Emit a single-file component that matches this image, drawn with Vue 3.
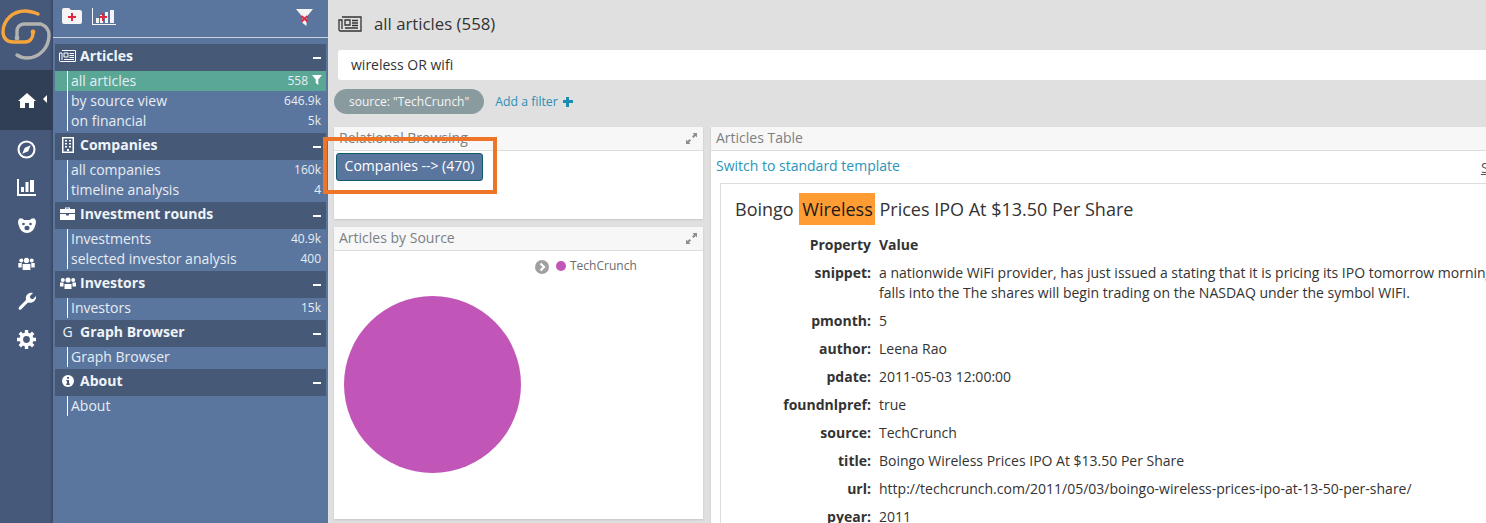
<template>
  <div class="app">
    <nav class="rail">
      <div class="logo">
        <svg width="53" height="70" viewBox="0 0 53 70" fill="none" stroke-width="3.400" stroke-linecap="round">
          <path d="M17 38 V31 C17 27 20 24 24 24 H41 C46 26 49 30 49 35 C49 48 39 58 27 58 C23 58 20 57 17 55" stroke="#b2b3b1"/>
          <circle cx="17" cy="38" r="2.400" fill="#b2b3b1"/>
          <path d="M38 14 C33 12 29 11 25 11 C13 11 3 20 3 32 C3 38 7 42 13 42 H25 C30 42 33 38 33 33" stroke="#f5a53c"/>
          <circle cx="33" cy="32" r="2.400" fill="#f5a53c"/>
        </svg>
      </div>
      <div class="rail-item active">
        <svg width="18" height="15" viewBox="0 0 18 15"><path d="M9 0 L18 8 L16 8 L16 15 L11 15 L11 10 L7 10 L7 15 L2 15 L2 8 L0 8 Z" fill="#fff"/></svg>
        <span class="caret"></span>
      </div>
      <div class="rail-icons">
        <div class="rail-icon"><svg width="19" height="19" viewBox="0 0 20 20"><circle cx="10" cy="10" r="8.400" fill="none" stroke="#fff" stroke-width="2.200"/><path d="M14.500 5.500 L11.800 11.800 L5.500 14.500 L8.200 8.200 Z" fill="#fff"/></svg></div>
        <div class="rail-icon"><svg width="19" height="17" viewBox="0 0 19 17"><path d="M0 0 H2 V15 H19 V17 H0 Z M4 8 H7 V13 H4 Z M8.500 3 H11.500 V13 H8.500 Z M13 1 H17 V13 H13 Z" fill="#fff"/></svg></div>
        <div class="rail-icon"><svg width="18" height="15" viewBox="0 0 18 15"><path d="M1 1 C3 -.5 5 1 6 2 H12 C13 1 15 -.5 17 1 C18.500 3 18 6 17 8 C16 12 13 15 9 15 C5 15 2 12 1 8 C0 6 -.5 3 1 1 Z" fill="#fff"/><circle cx="5.500" cy="6" r="1.300" fill="#46597a"/><circle cx="12.500" cy="6" r="1.300" fill="#46597a"/><ellipse cx="9" cy="10" rx="2.600" ry="2.200" fill="#46597a"/></svg></div>
        <div class="rail-icon"><svg width="17" height="13" viewBox="0 0 19 15"><circle cx="9.500" cy="4" r="3" fill="#fff"/><circle cx="3.500" cy="4" r="2.300" fill="#fff"/><circle cx="15.500" cy="4" r="2.300" fill="#fff"/><path d="M5 8 H14 V15 H5 Z M0 7 H4 V12 H0 Z M15 7 H19 V12 H15 Z" fill="#fff"/></svg></div>
        <div class="rail-icon"><svg width="19" height="19" viewBox="0 0 19 19"><path d="M2 15 L9 8 C8 4 11 0 16 1 L12.800 4.200 L13.500 6.500 L15.800 7.200 L19 4 C19.500 9 15 11.500 11 10.500 L4 17.500 C2.500 18.500 1 17 2 15 Z" fill="#fff"/></svg></div>
        <div class="rail-icon"><svg width="19" height="19" viewBox="0 0 19 19"><circle cx="9.500" cy="9.500" r="5.200" fill="none" stroke="#fff" stroke-width="3.600"/><g stroke="#fff" stroke-width="3.400"><path d="M9.500 0 V3.500 M9.500 15.500 V19 M0 9.500 H3.500 M15.500 9.500 H19 M2.800 2.800 L5.200 5.200 M13.800 13.800 L16.200 16.200 M2.800 16.200 L5.200 13.800 M13.800 5.200 L16.200 2.800"/></g></svg></div>
      </div>
    </nav>

    <aside class="sidebar">
      <div class="tools">
        <svg width="20" height="16" viewBox="0 0 20 16"><path d="M2 0 H7 L9 2 H18 A2 2 0 0 1 20 4 V14 A2 2 0 0 1 18 16 H2 A2 2 0 0 1 0 14 V2 A2 2 0 0 1 2 0 Z" fill="#f4f4f4"/><path d="M9 5 H11 V8 H14 V10 H11 V13 H9 V10 H6 V8 H9 Z" fill="#e0293f"/></svg>
        <svg width="24" height="17" viewBox="0 0 24 17"><path d="M0 0 H1 V16 H24 V17 H0 Z M4 10 H7 V15 H4 Z M8 7 H11 V15 H8 Z M13 4 H16 V15 H13 Z M18 2 H22 V15 H18 Z" fill="#f4f4f4"/><path d="M10 5 H12 V8 H15 V10 H12 V13 H10 V10 H7 V8 H10 Z" fill="#e0293f"/></svg>
        <svg class="clear" width="17" height="17" viewBox="0 0 17 17"><path d="M0 0 H17 L10.500 8 V17 L6.500 14 V8 Z" fill="#f4f4f4"/><path d="M5.500 7 L11.500 12.500 M11.500 7 L5.500 12.500" stroke="#e0293f" stroke-width="2"/></svg>
      </div>
      <section v-for="s in sections" :key="s.title" class="section">
        <header class="section-head">
          <span class="section-icon" v-html="s.icon"></span>
          <span class="section-title">{{ s.title }}</span>
          <span class="dash"></span>
        </header>
        <ul class="items">
          <li v-for="it in s.items" :key="it.label" :class="{ current: it.current }">
            <span class="label">{{ it.label }}</span>
            <span class="count">{{ it.count }}<svg v-if="it.current" class="mini" width="10" height="10" viewBox="0 0 10 10"><path d="M0 0 H10 L6.300 4.500 V10 L3.700 8 V4.500 Z" fill="#fff"/></svg></span>
          </li>
        </ul>
      </section>
    </aside>

    <main class="main">
      <div class="page-title">
        <svg width="24" height="16" viewBox="0 0 24 16" fill="none" stroke="#333" stroke-width="1.300"><path d="M4 1 H23 V15 H2 A1.500 1.500 0 0 1 1 13.500 V4 H4 V13"/><path d="M7 4 H12 V9 H7 Z M14 4.500 H20 M14 7 H20 M14 9.500 H20 M7 12 H20"/></svg>
        <span>all articles (558)</span>
      </div>
      <div class="search">wireless OR wifi</div>
      <div class="filters">
        <span class="pill">source: "TechCrunch"</span>
        <a class="add">Add a filter <b class="plus"></b></a>
      </div>
      <div class="panels">
        <div class="col">
          <div class="panel relational">
            <div class="panel-head">Relational Browsing<svg class="expand" width="11" height="11" viewBox="0 0 11 11"><path d="M6.500 0 H11 V4.500 L9.500 3 L7.500 5 L6 3.500 L8 1.500 Z M4.500 11 H0 V6.500 L1.500 8 L3.500 6 L5 7.500 L3 9.500 Z" fill="#8a8f92"/></svg></div>
            <div class="rel-body"><button class="rel-btn">Companies --&gt; (470)</button></div>
          </div>
          <div class="panel source">
            <div class="panel-head">Articles by Source<svg class="expand" width="11" height="11" viewBox="0 0 11 11"><path d="M6.500 0 H11 V4.500 L9.500 3 L7.500 5 L6 3.500 L8 1.500 Z M4.500 11 H0 V6.500 L1.500 8 L3.500 6 L5 7.500 L3 9.500 Z" fill="#8a8f92"/></svg></div>
            <div class="chart">
              <div class="legend">
                <svg class="page-arrow" width="14" height="14" viewBox="0 0 14 14"><circle cx="7" cy="7" r="7" fill="#a0a0a0"/><path d="M5.500 3.500 L9 7 L5.500 10.500" fill="none" stroke="#fff" stroke-width="2.200"/></svg>
                <span class="dot"></span>
                <span>TechCrunch</span>
              </div>
              <div class="pie"></div>
            </div>
          </div>
        </div>
        <div class="panel table-panel">
          <div class="panel-head">Articles Table</div>
          <div class="table-body">
            <div class="switch-row"><a class="switch">Switch to standard template</a><a class="show">Show</a></div>
            <div class="article">
              <h2>Boingo <mark>Wireless</mark> Prices IPO At $13.50 Per Share</h2>
              <div class="props">
                <template v-for="r in rows" :key="r.k">
                  <div class="k">{{ r.k }}</div>
                  <div class="v" :class="{ head: r.head }">{{ r.v }}</div>
                </template>
              </div>
            </div>
          </div>
        </div>
      </div>
      <div class="highlight"></div>
    </main>
  </div>
</template>

<script setup>
const newsIcon = '<svg width="17" height="12" viewBox="0 0 17 12" fill="none" stroke="#fff" stroke-width="1"><path d="M3 .5 H16.500 V11.500 H1.500 A1 1 0 0 1 .5 10.500 V3 H3 V10"/><path d="M5 3 H9 V7 H5 Z M10.500 3.500 H15 M10.500 5.500 H15 M10.500 7.500 H15 M5 9.500 H15"/></svg>'
const buildingIcon = '<svg width="12" height="16" viewBox="0 0 12 16"><path d="M0 0 H12 V16 H0 Z" fill="#fff"/><path d="M1.500 1.500 H10.500 V14.500 H1.500 Z" fill="#465a78"/><path d="M3 3 H5 V4.500 H3 Z M7 3 H9 V4.500 H7 Z M3 6 H5 V7.500 H3 Z M7 6 H9 V7.500 H7 Z M3 9 H5 V10.500 H3 Z M7 9 H9 V10.500 H7 Z M5 12 H7 V14 H5 Z" fill="#fff"/></svg>'
const briefcaseIcon = '<svg width="15" height="13" viewBox="0 0 15 13"><path d="M5 2 V.5 H10 V2 H15 V6 H0 V2 Z M6 1.500 V2 H9 V1.500 Z M0 7 H6 V8.500 H9 V7 H15 V13 H0 Z" fill="#fff" fill-rule="evenodd"/></svg>'
const usersIcon = '<svg width="16" height="12" viewBox="0 0 16 12"><circle cx="8" cy="3" r="2.600" fill="#fff"/><circle cx="2.800" cy="3" r="2" fill="#fff"/><circle cx="13.200" cy="3" r="2" fill="#fff"/><path d="M4.500 7 H11.500 V12 H4.500 Z M0 5.500 H3.500 V9.500 H0 Z M12.500 5.500 H16 V9.500 H12.500 Z" fill="#fff"/></svg>'
const infoIcon = '<svg width="12" height="12" viewBox="0 0 12 12"><circle cx="6" cy="6" r="6" fill="#fff"/><path d="M5 2 H7 V3.700 H5 Z M4.300 5 H7 V8.600 H7.800 V10 H4.300 V8.600 H5 V6.300 H4.300 Z" fill="#465a78"/></svg>'

const sections = [
  {
    title: 'Articles', icon: newsIcon,
    items: [
      { label: 'all articles', count: '558', current: true },
      { label: 'by source view', count: '646.9k' },
      { label: 'on financial', count: '5k' }
    ]
  },
  {
    title: 'Companies', icon: buildingIcon,
    items: [
      { label: 'all companies', count: '160k' },
      { label: 'timeline analysis', count: '4' }
    ]
  },
  {
    title: 'Investment rounds', icon: briefcaseIcon,
    items: [
      { label: 'Investments', count: '40.9k' },
      { label: 'selected investor analysis', count: '400' }
    ]
  },
  { title: 'Investors', icon: usersIcon, items: [{ label: 'Investors', count: '15k' }] },
  { title: 'Graph Browser', icon: 'G', items: [{ label: 'Graph Browser', count: '' }] },
  { title: 'About', icon: infoIcon, items: [{ label: 'About', count: '' }] }
]

const rows = [
  { k: 'Property', v: 'Value', head: true },
  { k: 'snippet:', v: 'a nationwide WiFi provider, has just issued a stating that it is pricing its IPO tomorrow morning\nfalls into the The shares will begin trading on the NASDAQ under the symbol WIFI.' },
  { k: 'pmonth:', v: '5' },
  { k: 'author:', v: 'Leena Rao' },
  { k: 'pdate:', v: '2011-05-03 12:00:00' },
  { k: 'foundnlpref:', v: 'true' },
  { k: 'source:', v: 'TechCrunch' },
  { k: 'title:', v: 'Boingo Wireless Prices IPO At $13.50 Per Share' },
  { k: 'url:', v: 'http://techcrunch.com/2011/05/03/boingo-wireless-prices-ipo-at-13-50-per-share/' },
  { k: 'pyear:', v: '2011' }
]
</script>

<style>
html, body { margin: 0; overflow: hidden; }
</style>

<style scoped>
.app {
  display: flex;
  width: 1486px;
  height: 523px;
  overflow: hidden;
  font-family: "Open Sans", sans-serif;
  font-size: 14px;
  color: #333;
  background: #e0e0e0;
}

.rail {
  flex: 0 0 53px;
  background: #46597a;
  box-shadow: inset -3px 0 3px -2px rgba(0, 0, 0, 0.25);
}
.logo { height: 70px; }
.logo svg { display: block; }
.rail-item.active {
  height: 60px;
  background: #303f55;
  display: flex;
  align-items: center;
  justify-content: center;
  position: relative;
}
.caret {
  position: absolute;
  right: 6px;
  top: 25px;
  border: 4px solid transparent;
  border-left: 0;
  border-right: 4px solid #fff;
}
.rail-icon { height: 38px; display: flex; align-items: center; justify-content: center; }

.sidebar { flex: 0 0 275px; background: #5b769e; color: #e6edf4; }
.tools {
  height: 38px;
  margin-bottom: 6px;
  border-bottom: 1px solid #c9d3e0;
  display: flex;
  align-items: flex-start;
  gap: 10px;
  padding: 8px 15px 0 9px;
  box-sizing: border-box;
}
.clear { margin-left: auto; margin-top: 1px; }

.section { margin: 0 2px 2px; }
.section-head {
  height: 27px;
  box-sizing: border-box;
  background: #465a78;
  display: flex;
  align-items: center;
  padding: 0 5px 4px 4px;
  font-weight: 700;
  font-size: 14px;
  color: #f0f4f8;
}
.section-icon { width: 17px; margin-right: 4px; display: flex; justify-content: center; font-weight: 400; }
.dash { margin: 4px 0 0 auto; width: 8px; height: 2px; background: #fff; }
.items { list-style: none; margin: 0; padding: 0; }
.items li {
  position: relative;
  height: 20px;
  line-height: 20px;
  display: flex;
  justify-content: space-between;
  padding: 0 5px 0 16px;
  font-size: 14px;
}
.items li::before {
  content: "";
  position: absolute;
  left: 12px;
  top: 0;
  bottom: 0;
  width: 1px;
  background: #fff;
}
.items li.current { background: #5aa796; }
.count { font-size: 12px; }
.mini { margin: 0 -1px 0 4px; }

.main { flex: 0 0 auto; width: 1158px; position: relative; padding: 0 0 0 6px; box-sizing: border-box; }
.page-title {
  height: 50px;
  display: flex;
  align-items: center;
  gap: 12px;
  padding-left: 4px;
  padding-bottom: 3px;
  font-size: 16.800px;
  box-sizing: border-box;
}
.search {
  height: 30px;
  line-height: 29px;
  margin-left: 4px;
  padding-left: 13px;
  background: #fff;
  border-radius: 3px 0 0 3px;
  font-size: 14px;
}
.filters { display: flex; align-items: center; gap: 11px; margin-top: 9px; height: 25px; }
.pill {
  height: 25px;
  line-height: 25px;
  padding: 0 15px;
  border-radius: 13px;
  background: #8a9ba0;
  color: #f2f5f5;
  font-size: 12px;
}
.add { color: #2b8fb3; font-size: 12.250px; display: flex; align-items: center; gap: 5px; }
.plus {
  width: 10px;
  height: 10px;
  background:
    linear-gradient(#1a8cb0, #1a8cb0) center / 10px 3px no-repeat,
    linear-gradient(#1a8cb0, #1a8cb0) center / 3px 10px no-repeat;
}

.panels { display: flex; gap: 8px; margin-top: 13px; }
.col { flex: 0 0 369px; display: flex; flex-direction: column; gap: 8px; }
.panel { background: #fff; box-shadow: 0 1px 2px rgba(0, 0, 0, 0.12); }
.panel-head {
  height: 23px;
  line-height: 22px;
  padding-left: 5px;
  background: #f7f7f7;
  border-bottom: 1px solid #ddd;
  color: #7b8083;
  font-size: 14px;
  position: relative;
}
.expand { position: absolute; right: 6px; top: 6px; }
.relational { height: 92px; }
.rel-body { padding: 2px 2px 0; }
.rel-btn {
  display: block;
  width: 147px;
  height: 28px;
  padding: 0 0 3px;
  background: #5b769e;
  border: 1px solid #0e5a6b;
  border-radius: 3px;
  color: #fff;
  font: 14px "Open Sans", sans-serif;
}
.source { height: 292px; }
.chart { position: relative; height: 268px; }
.legend {
  position: absolute;
  left: 201px;
  top: 6px;
  display: flex;
  align-items: flex-start;
  gap: 7px;
  line-height: 18px;
  font-size: 12px;
  color: #6b6b6b;
}
.page-arrow { margin-top: 3px; }
.dot { width: 10px; height: 10px; margin: 4px -3px 0 0; border-radius: 50%; background: #c255b8; }
.pie {
  position: absolute;
  left: 10px;
  top: 45px;
  width: 177px;
  height: 177px;
  border-radius: 50%;
  background: #c255b8;
}

.table-panel { flex: 0 0 900px; height: 500px; }
.table-body { padding: 0 5px; }
.switch-row { display: flex; gap: 581px; height: 32px; line-height: 30px; white-space: nowrap; }
.switch { color: #2b93b8; font-size: 14px; }
.show { font-size: 14px; line-height: 34px; color: #555; text-decoration: underline; }
.article {
  margin-left: 4px;
  border: 1px solid #ddd;
  padding: 9px 14px;
  width: 1200px;
}
h2 { margin: 0 0 10px; font-size: 18px; font-weight: 400; line-height: 32px; }
mark { background: #ff9c33; color: #1a1a1a; padding: 4px 2px 4px 3px; margin-left: 1px; }
.props {
  display: grid;
  grid-template-columns: 136px 1fr;
  column-gap: 8px;
  font-size: 14px;
  line-height: 20px;
  row-gap: 8px;
}
.k { font-weight: 700; text-align: right; }
.v { white-space: pre-line; }
.v.head { font-weight: 700; }

.highlight {
  position: absolute;
  left: -5px;
  top: 137px;
  width: 166px;
  height: 49px;
  border: 4px solid #ee7427;
  pointer-events: none;
}
</style>
